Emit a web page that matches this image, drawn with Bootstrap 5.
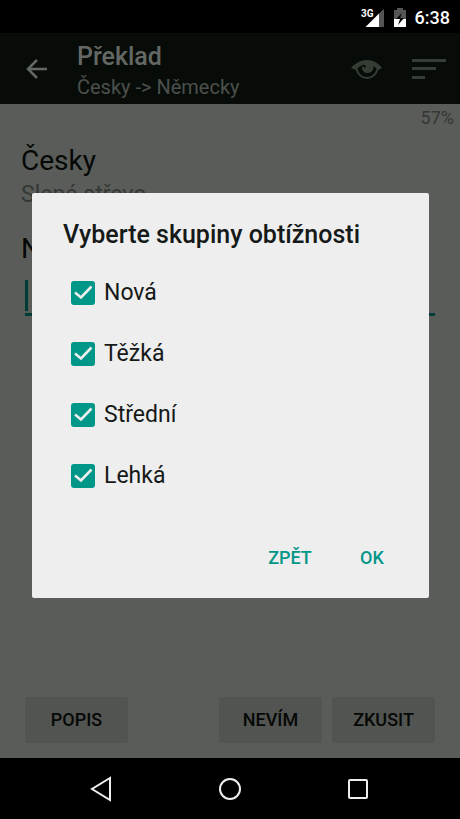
<!DOCTYPE html>
<html lang="cs">
<head>
<meta charset="utf-8">
<meta name="viewport" content="width=device-width, initial-scale=1">
<title>Překlad</title>
<link href="https://cdn.jsdelivr.net/npm/bootstrap@5.3.0/dist/css/bootstrap.min.css" rel="stylesheet">
<style>
  body { font-family: Roboto, "Noto Sans", sans-serif; background: #000; color: #050805; }
  .status-bar { height: 33px; padding: 2px 10px 0 0; color: #fff; font-size: 18px; line-height: 24px; font-weight: 500; }
  .net-type { font-size: 10px; font-weight: 700; }
  .screen { background: #5a5c59; }
  .app-bar { height: 71px; padding: 0 13px 0 24px; background: #070c08; color: #646864; }
  .app-heading { padding: 7px 0 0 27px; }
  .app-title { font-size: 25px; line-height: 30px; font-weight: 500; }
  .app-subtitle { font-size: 20px; line-height: 30px; color: #4c504c; }
  .bar-btn { color: inherit; line-height: 0; }
  .bar-icon { color: #363d35; }
  .bar-icons { gap: 28px; }
  .progress-label { padding-right: 6px; font-size: 18px; line-height: 28px; color: #343734; }
  .fields { padding: 11px 25px 0 21px; }
  .lang-title { font-size: 28px; line-height: 36px; font-weight: 400; }
  .lang-word { margin-bottom: 20px; font-size: 23px; line-height: 32px; color: #343734; }
  .answer-wrap { padding: 9px 0 0 4px; }
  .answer { display: block; height: 40px; border: 0; border-bottom: 3px solid #003c36; outline: 0;
    background: linear-gradient(#003c36, #003c36) 0 4px / 3px 31px no-repeat; }
  .actions { gap: 10px; padding: 0 25px 15px; }
  .btn-flat { min-width: 103px; height: 46px; border-radius: 2px; background: #525451; color: #050805; font-size: 18px; font-weight: 500; line-height: 24px; }
  .scrim { padding: 0 31px 0 32px; }
  .dialog-box { background: #eee; border-radius: 2px; padding: 27px 16px 17px 31px; color: #151918; }
  .dialog-title { font-size: 25px; line-height: 30px; font-weight: 500; }
  .options { padding: 12px 0 29px; }
  .option { min-height: 61px; padding-left: 8px; font-size: 23px; line-height: 30px; }
  .option .form-check-input { float: none; width: 24px; height: 24px; border: 0; border-radius: 3px; }
  .option label { padding: 1px 0 0 9px; }
  .option .form-check-input:checked { background-color: #009688;
    background-image: url("data:image/svg+xml,%3Csvg xmlns='http://www.w3.org/2000/svg' viewBox='0 0 24 24'%3E%3Cpath d='M4 11.500l6 5L20.500 5.500' fill='none' stroke='%23eee' stroke-width='2.600'/%3E%3C/svg%3E"); }
  .btn-text { height: 46px; min-width: 82px; color: #009688; font-size: 18px; font-weight: 500; line-height: 24px; }
  .nav-keys { height: 61px; padding: 0 38px 0 36px; }
</style>
</head>
<body class="min-vh-100 d-flex flex-column">
  <header class="status-bar d-flex align-items-center justify-content-end">
    <svg width="24" height="20" viewBox="0 0 24 20" aria-label="3G" role="img">
      <path d="M18 5.500v13.500H4.500z" fill="#fff"/><path d="M18 5.500L23 1v18h-5z" fill="#555"/>
      <text x="0" y="9" class="net-type" fill="#fff">3G</text>
    </svg>
    <svg class="ms-2" width="14" height="20" viewBox="0 0 14 20" aria-hidden="true">
      <path d="M4 0h6v2h3v17H1V2h3z" fill="#555"/><path d="M1 11h12v8H1z" fill="#fff"/>
      <path d="M9 5l-6 6h4l-2 6 6-7H7z" fill="#000"/>
    </svg>
    <span class="ms-2">6:38</span>
  </header>

  <div class="screen position-relative flex-grow-1 d-flex flex-column">
    <nav class="app-bar d-flex align-items-center" aria-label="Překlad">
      <button type="button" class="btn bar-btn p-0" aria-label="Zpět">
        <svg width="24" height="24" viewBox="0 0 24 24" fill="none" stroke="currentColor" stroke-width="2.500"><path d="M22 12H3M12 3l-9 9 9 9"/></svg>
      </button>
      <div class="flex-grow-1 app-heading">
        <h1 class="app-title m-0">Překlad</h1>
        <div class="app-subtitle">Česky -&gt; Německy</div>
      </div>
      <div class="bar-icons d-flex align-items-center">
        <button type="button" class="btn bar-btn bar-icon p-0" aria-label="Zobrazit">
          <svg width="32" height="24" viewBox="0 0 32 24"><path d="M1 11Q8 3 17 3t15 8l-4 2Q23 7 17 7T6 13z" fill="currentColor"/><path d="M6 11q3 10 11 10t11-10" fill="none" stroke="currentColor" stroke-width="2"/><path d="M12 6h10a6 6 0 0 1-5 10 5.500 5.500 0 0 1-5-7l3 2 1-2z" fill="currentColor"/></svg>
        </button>
        <button type="button" class="btn bar-btn bar-icon p-0" aria-label="Nabídka">
          <svg width="34" height="22" viewBox="0 0 34 22" fill="currentColor"><path d="M0 1h34v3H0zM0 9h24v3H0zM0 18h13v3H0z"/></svg>
        </button>
      </div>
    </nav>

    <main class="flex-grow-1 d-flex flex-column">
      <div class="progress-label text-end">57%</div>
      <form class="flex-grow-1 d-flex flex-column">
        <section class="fields">
          <h2 class="lang-title m-0">Česky</h2>
          <p class="lang-word">Slepé střevo</p>
          <label class="lang-title d-block" for="answer">Německy</label>
          <div class="answer-wrap"><input id="answer" class="answer w-100 p-0" type="text"></div>
        </section>
        <div class="d-flex mt-auto actions">
          <button type="button" class="btn btn-flat">POPIS</button>
          <button type="button" class="btn btn-flat ms-auto">NEVÍM</button>
          <button type="button" class="btn btn-flat">ZKUSIT</button>
        </div>
      </form>
    </main>

    <div class="scrim position-absolute top-0 start-0 w-100 h-100 d-flex align-items-center">
      <form class="dialog-box w-100" role="dialog" aria-labelledby="dlg-title">
        <h2 id="dlg-title" class="dialog-title mb-0">Vyberte skupiny obtížnosti</h2>
        <div class="options">
          <div class="option form-check d-flex align-items-center m-0"><input class="form-check-input m-0" type="checkbox" id="g1" checked><label for="g1">Nová</label></div>
          <div class="option form-check d-flex align-items-center m-0"><input class="form-check-input m-0" type="checkbox" id="g2" checked><label for="g2">Těžká</label></div>
          <div class="option form-check d-flex align-items-center m-0"><input class="form-check-input m-0" type="checkbox" id="g3" checked><label for="g3">Střední</label></div>
          <div class="option form-check d-flex align-items-center m-0"><input class="form-check-input m-0" type="checkbox" id="g4" checked><label for="g4">Lehká</label></div>
        </div>
        <div class="d-flex justify-content-end">
          <button type="button" class="btn btn-text">ZPĚT</button>
          <button type="button" class="btn btn-text">OK</button>
        </div>
      </form>
    </div>
  </div>

  <footer class="nav-keys d-flex align-items-center justify-content-around">
    <button type="button" class="btn p-0" aria-label="Zpět"><svg width="24" height="26" viewBox="0 0 24 26" fill="none" stroke="#eee" stroke-width="2"><path d="M21 2v22L3 13z"/></svg></button>
    <button type="button" class="btn p-0" aria-label="Domů"><svg width="24" height="24" viewBox="0 0 24 24" fill="none" stroke="#eee" stroke-width="2"><circle cx="12" cy="12" r="10"/></svg></button>
    <button type="button" class="btn p-0" aria-label="Přehled"><svg width="22" height="22" viewBox="0 0 22 22" fill="none" stroke="#eee" stroke-width="2"><rect x="2" y="2" width="18" height="18" rx="1"/></svg></button>
  </footer>
<script src="https://cdn.jsdelivr.net/npm/bootstrap@5.3.0/dist/js/bootstrap.bundle.min.js"></script>
</body>
</html>
